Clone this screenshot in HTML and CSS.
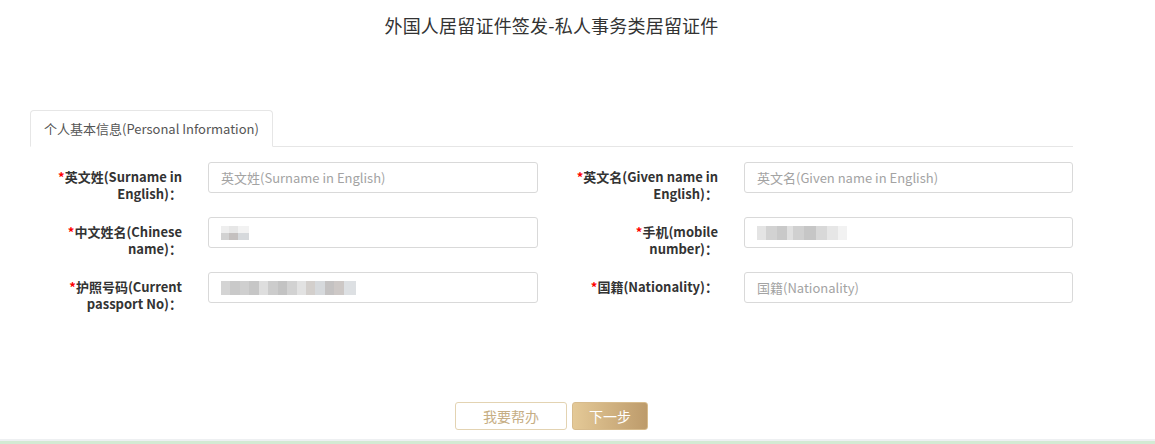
FILE: index.html
```html
<!DOCTYPE html>
<html lang="zh-CN">
<head>
<meta charset="utf-8">
<title>外国人居留证件签发</title>
<link rel="stylesheet" href="styles.css">
</head>
<body>
<div class="page">
  <h1 class="title">外国人居留证件签发-私人事务类居留证件</h1>

  <div class="tabs">
    <div class="tab active">个人基本信息(Personal Information)</div>
  </div>

  <div class="form">
    <label class="label"><span class="req">*</span>英文姓(Surname in<br>English)：</label>
    <div class="field"><input class="input" placeholder="英文姓(Surname in English)"></div>
    <label class="label"><span class="req">*</span>英文名(Given name in<br>English)：</label>
    <div class="field"><input class="input" placeholder="英文名(Given name in English)"></div>

    <label class="label"><span class="req">*</span>中文姓名(Chinese<br>name)：</label>
    <div class="field"><div class="input filled"><span class="mosaic mosaic-name"></span></div></div>
    <label class="label"><span class="req">*</span>手机(mobile<br>number)：</label>
    <div class="field"><div class="input filled"><span class="mosaic mosaic-phone"></span></div></div>

    <label class="label"><span class="req">*</span>护照号码(Current<br>passport No)：</label>
    <div class="field"><div class="input filled"><span class="mosaic mosaic-passport"></span></div></div>
    <label class="label"><span class="req">*</span>国籍(Nationality)：</label>
    <div class="field"><input class="input" placeholder="国籍(Nationality)"></div>
  </div>

  <div class="actions">
    <button class="btn btn-help">我要帮办</button>
    <button class="btn btn-next">下一步</button>
  </div>
</div>
<div class="footer"></div>
</body>
</html>
```

FILE: styles.css
```css
* { box-sizing: border-box; }

html, body {
  margin: 0;
  padding: 0;
  background: #fff;
}

body {
  font-family: "Noto Sans CJK SC", "Noto Sans", sans-serif;
  color: #333;
  height: 444px;
  overflow: hidden;
}

.page {
  width: 1103px;
}

.title {
  margin: 0;
  padding-top: 13px;
  font-size: 18px;
  line-height: 24px;
  font-weight: normal;
  letter-spacing: 0.2px;
  color: #333;
  text-align: center;
}

.tabs {
  display: flex;
  margin: 73px 0 0 30px;
  width: 1043px;
  border-bottom: 1px solid #e6e6e6;
}

.tab {
  height: 37px;
  margin-bottom: -1px;
  padding: 0 13px;
  border: 1px solid #e6e6e6;
  border-bottom-color: #fff;
  border-radius: 4px 4px 0 0;
  background: #fff;
  font-size: 13px;
  line-height: 35px;
  color: #555;
}

.form {
  display: grid;
  grid-template-columns: 208px 330px 206px 329px;
  row-gap: 15px;
  margin-top: 15px;
  align-items: start;
}

.label {
  padding: 6px 26px 0 0;
  text-align: right;
  font-size: 13px;
  line-height: 17px;
  font-weight: bold;
  color: #333;
}

.req {
  color: #f00;
}

.field {
  height: 31px;
}

.input {
  display: block;
  width: 100%;
  height: 31px;
  padding: 0 12px;
  border: 1px solid #d9d9d9;
  border-radius: 3px;
  background: #fff;
  font-family: inherit;
  font-size: 13px;
  color: #333;
  outline: none;
}

.input::placeholder {
  color: #a3a3a3;
}

.filled {
  display: flex;
  align-items: center;
}

.mosaic {
  display: block;
  height: 14px;
}

.mosaic-name {
  width: 28px;
  background:
    linear-gradient(90deg, #d2d2d2 0 30%, #c4c0bf 30% 60%, #d6d9dc 60% 100%) bottom / 100% 50% no-repeat,
    linear-gradient(90deg, #eeeeee 0 30%, #e6e6e6 30% 60%, #f2f2f2 60% 100%) top / 100% 50% no-repeat;
}

.mosaic-phone {
  width: 90px;
  background: linear-gradient(90deg,
    #e4e4e4 0 10%, #d2d2d2 10% 22%, #c9c9c9 22% 33%, #e0e0e0 33% 40%,
    #d0d0d0 40% 52%, #c6c6c6 52% 66%, #d8d8d8 66% 78%, #e6e6e6 78% 90%, #f2f2f2 90% 100%);
}

.mosaic-passport {
  width: 135px;
  background: linear-gradient(90deg,
    #d4d4d4 0 7%, #c9c9c9 7% 14%, #cfcfcf 14% 21%, #c6c6c6 21% 28%, #dedede 28% 35%,
    #cccccc 35% 42%, #c3c3c3 42% 49%, #d2d2d2 49% 56%, #e2e2e2 56% 63%, #d3cfcc 63% 70%,
    #d6d9dc 70% 77%, #c4c2c2 77% 84%, #cdc8c6 84% 91%, #dde0e3 91% 100%);
}

.actions {
  display: flex;
  justify-content: center;
  gap: 5px;
  margin-top: 90px;
}

.btn {
  height: 28px;
  border-radius: 3px;
  font-family: inherit;
  font-size: 14px;
  line-height: 26px;
  padding: 0;
  cursor: pointer;
}

.btn-help {
  width: 112px;
  border: 1px solid #e3d3b2;
  background: #fff;
  color: #c6ae84;
}

.btn-next {
  width: 76px;
  border: 1px solid #d7bb8c;
  background: linear-gradient(90deg, #e4c997, #bd9b6b);
  color: #fff;
}

.footer {
  margin-top: 9px;
  height: 5px;
  border-top: 2px solid #eef0f2;
  background: #d3ead3;
}
```
